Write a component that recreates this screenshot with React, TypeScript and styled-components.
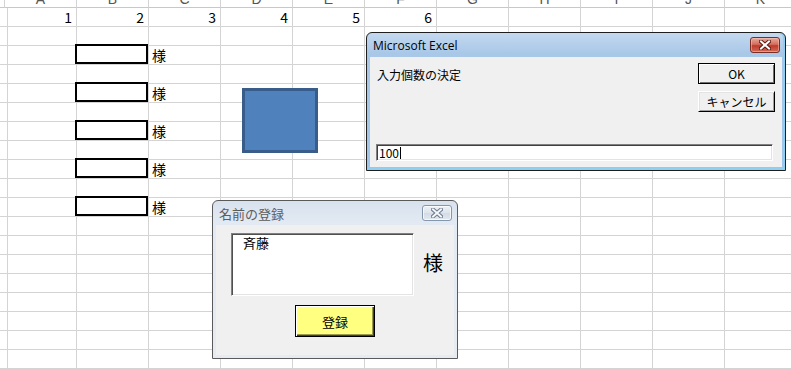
import React from "react";
import styled, { createGlobalStyle } from "styled-components";

const GlobalStyle = createGlobalStyle`
  html, body {
    margin: 0;
    padding: 0;
    background: #fff;
    overflow: hidden;
  }
  body {
    font-family: "Noto Sans CJK JP", "Liberation Sans", sans-serif;
  }
`;

const COLS = ["A", "B", "C", "D", "E", "F", "G", "H", "I", "J", "K"];
const ROW_COUNT = 19;
const BOXED_ROWS = [3, 5, 7, 9, 11];

const Screen = styled.div`
  position: relative;
  width: 791px;
  height: 369px;
  overflow: hidden;
  background: #fff;
`;

const Sheet = styled.div`
  display: grid;
  grid-template-columns: 5px repeat(11, 72px);
  grid-template-rows: 20px;
  grid-auto-rows: 19px;
  margin-top: -12px;
`;

const HeaderCell = styled.div`
  box-sizing: border-box;
  border-right: 1px solid #d4d4d4;
  border-bottom: 1px solid #c8c8c8;
  display: flex;
  align-items: flex-end;
  justify-content: center;
  padding-bottom: 1px;
  font-family: "Liberation Sans", sans-serif;
  font-size: 14px;
  color: #555;
  line-height: 1;
`;

const Cell = styled.div<{ $align?: "left" | "right"; $boxed?: boolean }>`
  position: relative;
  box-sizing: border-box;
  border-right: 1px solid #d4d4d4;
  border-bottom: 1px solid #d4d4d4;
  display: flex;
  align-items: flex-end;
  justify-content: ${(p) => (p.$align === "right" ? "flex-end" : "flex-start")};
  padding: 0 4px 0 3px;
  font-size: 14px;
  line-height: 17px;
  color: #000;
  white-space: nowrap;

  ${(p) =>
    p.$boxed &&
    `
    &::after {
      content: "";
      position: absolute;
      top: -2px;
      left: -2px;
      right: 0;
      bottom: 0;
      border: 2px solid #000;
    }
  `}
`;

const Shape = styled.div`
  position: absolute;
  left: 242px;
  top: 88px;
  width: 76px;
  height: 65px;
  box-sizing: border-box;
  background: #4f81bd;
  border: 3px solid #385d8a;
`;

const Window = styled.div<{ $active?: boolean }>`
  position: absolute;
  box-sizing: border-box;
  display: flex;
  flex-direction: column;
  border: 1px solid ${(p) => (p.$active ? "#1e1e1e" : "#5a5a5a")};
  border-radius: 6px 6px 0 0;
  padding: 0 3px 3px;
  background: ${(p) =>
    p.$active
      ? "linear-gradient(#c4d9ef, #a9c8e8 20px, #9ec6ea)"
      : "linear-gradient(#d8e2ee, #e3eaf3 24px, #e6ebf1)"};
  box-shadow: ${(p) =>
    p.$active ? "inset 0 -2px 0 #8fd0f2, inset -2px 0 0 #8fd0f2" : "none"};
`;

const ExcelWindow = styled(Window)`
  left: 366px;
  top: 32px;
  width: 420px;
  height: 139px;
`;

const NameWindow = styled(Window)`
  left: 212px;
  top: 200px;
  width: 246px;
  height: 159px;
`;

const TitleBar = styled.div<{ $active?: boolean }>`
  height: 24px;
  display: flex;
  align-items: center;
  justify-content: space-between;
  padding: 0 2px 0 3px;
  font-family: ${(p) =>
    p.$active ? `"Open Sans", "Noto Sans", sans-serif` : `"Noto Sans CJK JP", sans-serif`};
  font-size: ${(p) => (p.$active ? "12px" : "13px")};
  color: ${(p) => (p.$active ? "#000" : "#5c5c5c")};
`;

const CloseButton = styled.div<{ $active?: boolean }>`
  width: 30px;
  height: 16px;
  box-sizing: border-box;
  border-radius: 3px;
  display: flex;
  align-items: center;
  justify-content: center;
  border: 1px solid ${(p) => (p.$active ? "#7a2d24" : "#8497ad")};
  background: ${(p) =>
    p.$active
      ? "linear-gradient(#e8a99d, #d2705f 45%, #c0392b 55%, #d06a57)"
      : "linear-gradient(#eef2f7, #dde4ec 50%, #d3dbe5 51%, #e2e8ef)"};
  box-shadow: inset 0 0 0 1px ${(p) => (p.$active ? "rgba(255,200,190,0.5)" : "rgba(255,255,255,0.7)")};
`;

const Body = styled.div`
  flex: 1;
  background: #f0f0f0;
  display: flex;
  flex-direction: column;
`;

const PromptRow = styled.div`
  display: flex;
  justify-content: space-between;
  padding: 6px 7px 0 7px;
`;

const Prompt = styled.div`
  font-size: 12px;
  line-height: 14px;
  padding-top: 5px;
  color: #000;
`;

const ButtonStack = styled.div`
  display: flex;
  flex-direction: column;
  gap: 7px;
`;

const ClassicButton = styled.div<{ $default?: boolean }>`
  width: 77px;
  height: 21px;
  box-sizing: border-box;
  display: flex;
  align-items: center;
  justify-content: center;
  font-size: 12px;
  background: #f0f0f0;
  color: #000;
  border: 1px solid ${(p) => (p.$default ? "#000" : "#fff")};
  border-right-color: #000;
  border-bottom-color: #000;
  box-shadow: ${(p) =>
    p.$default
      ? "inset 1px 1px 0 #fff, inset -1px -1px 0 #6e6e6e"
      : "inset 1px 1px 0 #e3e3e3, inset -1px -1px 0 #a0a0a0"};
`;

const InputBox = styled.div`
  margin: auto 9px 6px 6px;
  height: 17px;
  box-sizing: border-box;
  background: #fff;
  border-top: 1px solid #808080;
  border-left: 1px solid #808080;
  border-right: 1px solid #fff;
  border-bottom: 1px solid #fff;
  box-shadow: inset 1px 1px 0 #404040, inset -1px -1px 0 #e3e3e3;
  display: flex;
  align-items: center;
  padding-left: 2px;
  font-size: 12px;
  color: #000;
`;

const Caret = styled.span`
  display: inline-block;
  width: 1px;
  height: 12px;
  background: #000;
  margin-left: 1px;
`;

const NameBody = styled(Body)`
  padding: 8px 0 0 15px;
`;

const ListRow = styled.div`
  display: flex;
  align-items: center;
`;

const ListBox = styled.div`
  width: 183px;
  height: 63px;
  box-sizing: border-box;
  background: #fff;
  border-top: 1px solid #808080;
  border-left: 1px solid #808080;
  border-right: 1px solid #fff;
  border-bottom: 1px solid #fff;
  box-shadow: inset 1px 1px 0 #505050, inset -1px -1px 0 #e3e3e3;
  padding: 1px 0 0 11px;
  font-size: 13px;
  line-height: 16px;
  color: #000;
`;

const SamaLabel = styled.div`
  margin-left: 9px;
  font-size: 20px;
  line-height: 24px;
  color: #000;
  padding-bottom: 4px;
`;

const RegisterButton = styled.div`
  align-self: center;
  margin: 9px 0 0 -15px;
  width: 80px;
  height: 32px;
  box-sizing: border-box;
  display: flex;
  align-items: center;
  justify-content: center;
  background: #ffff80;
  border: 1px solid #000;
  box-shadow: inset 1px 1px 0 #fff, inset -1px -1px 0 #404040, inset -2px -2px 0 #9a9a50;
  font-size: 13px;
  color: #000;
`;

const CloseGlyph = ({ active }: { active?: boolean }) => (
  <svg width="12" height="10" viewBox="0 0 12 10">
    <path
      d="M2 1.5 L10 8.5 M10 1.5 L2 8.5"
      stroke={active ? "#5a1a12" : "#6c7a8c"}
      strokeWidth="4"
      strokeLinecap="square"
    />
    <path
      d="M2 1.5 L10 8.5 M10 1.5 L2 8.5"
      stroke={active ? "#fff" : "#f4f6f9"}
      strokeWidth="2"
      strokeLinecap="square"
    />
  </svg>
);

const cellContent = (row: number, col: number) => {
  if (row === 1 && col < 6) return { text: String(col + 1), align: "right" as const };
  if (BOXED_ROWS.includes(row) && col === 2) return { text: "様", align: "left" as const };
  return { text: "", align: "left" as const };
};

export default function App() {
  const rows = Array.from({ length: ROW_COUNT }, (_, i) => i + 1);

  return (
    <Screen>
      <GlobalStyle />
      <Sheet>
        <HeaderCell />
        {COLS.map((c) => (
          <HeaderCell key={c}>{c}</HeaderCell>
        ))}
        {rows.map((r) => (
          <React.Fragment key={r}>
            <Cell />
            {COLS.map((c, ci) => {
              const { text, align } = cellContent(r, ci);
              return (
                <Cell
                  key={c}
                  $align={align}
                  $boxed={BOXED_ROWS.includes(r) && ci === 1}
                >
                  {text}
                </Cell>
              );
            })}
          </React.Fragment>
        ))}
      </Sheet>

      <Shape />

      <ExcelWindow $active>
        <TitleBar $active>
          <span>Microsoft Excel</span>
          <CloseButton $active>
            <CloseGlyph active />
          </CloseButton>
        </TitleBar>
        <Body>
          <PromptRow>
            <Prompt>入力個数の決定</Prompt>
            <ButtonStack>
              <ClassicButton $default>OK</ClassicButton>
              <ClassicButton>キャンセル</ClassicButton>
            </ButtonStack>
          </PromptRow>
          <InputBox>
            100
            <Caret />
          </InputBox>
        </Body>
      </ExcelWindow>

      <NameWindow>
        <TitleBar>
          <span>名前の登録</span>
          <CloseButton>
            <CloseGlyph />
          </CloseButton>
        </TitleBar>
        <NameBody>
          <ListRow>
            <ListBox>斉藤</ListBox>
            <SamaLabel>様</SamaLabel>
          </ListRow>
          <RegisterButton>登録</RegisterButton>
        </NameBody>
      </NameWindow>
    </Screen>
  );
}
